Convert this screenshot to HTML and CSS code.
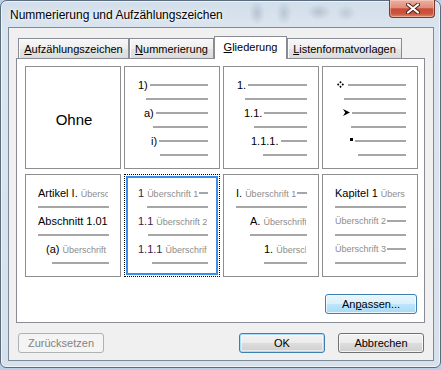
FILE: index.html
```html
<!DOCTYPE html>
<html lang="de">
<head>
<meta charset="utf-8">
<title>Nummerierung und Aufzählungszeichen</title>
<link rel="stylesheet" href="styles.css">
</head>
<body>
<div class="window">
  <div class="titlebar">
    <span class="title">Nummerierung und Aufzählungszeichen</span>
    <div class="close">
      <svg width="14" height="11" viewBox="0 0 14 11"><path d="M2 1.5 L12 9.5 M12 1.5 L2 9.5" stroke="#4a1f18" stroke-width="4" stroke-linecap="round"/><path d="M2 1.5 L12 9.5 M12 1.5 L2 9.5" stroke="#fff" stroke-width="2.2" stroke-linecap="round"/></svg>
    </div>
  </div>
  <div class="client">
    <div class="tabs">
      <div class="tab tab-bullets"><u>A</u>ufzählungszeichen</div>
      <div class="tab tab-numbers"><u>N</u>ummerierung</div>
      <div class="tab tab-outline is-active"><u>G</u>liederung</div>
      <div class="tab tab-styles"><u>L</u>istenformatvorlagen</div>
    </div>
    <div class="panel">
      <div class="grid">
        <div class="cell c-none"><span class="none-label">Ohne</span></div>

        <div class="cell">
          <div class="row in13"><span class="lbl">1)</span><span class="ln"></span></div>
          <div class="row in19"><span class="ln"></span></div>
          <div class="row in19"><span class="lbl">a)</span><span class="ln"></span></div>
          <div class="row in26"><span class="ln"></span></div>
          <div class="row in26"><span class="lbl">i)</span><span class="ln"></span></div>
          <div class="row in33"><span class="ln"></span></div>
        </div>

        <div class="cell">
          <div class="row in13"><span class="lbl">1.</span><span class="ln"></span></div>
          <div class="row in19"><span class="ln"></span></div>
          <div class="row in20"><span class="lbl">1.1.</span><span class="ln"></span></div>
          <div class="row in28"><span class="ln"></span></div>
          <div class="row in27"><span class="lbl">1.1.1.</span><span class="ln"></span></div>
          <div class="row in37"><span class="ln"></span></div>
        </div>

        <div class="cell">
          <div class="row in14"><span class="bullet"><svg width="7" height="7" viewBox="0 0 7 7"><path d="M3.5 0 L4.7 1.2 L3.5 2.4 L2.3 1.2 Z M1.2 2.3 L2.4 3.5 L1.2 4.7 L0 3.5 Z M5.8 2.3 L7 3.5 L5.8 4.7 L4.6 3.5 Z M3.5 4.6 L4.7 5.8 L3.5 7 L2.3 5.8 Z"/></svg></span><span class="ln ln-b"></span></div>
          <div class="row in19"><span class="ln"></span></div>
          <div class="row in20"><span class="bullet"><svg width="7" height="7" viewBox="0 0 7 7"><path d="M0 0 L7 3.5 L0 7 L2.2 3.5 Z"/></svg></span><span class="ln"></span></div>
          <div class="row in26"><span class="ln"></span></div>
          <div class="row in27"><span class="bullet bullet-sq"></span><span class="ln"></span></div>
          <div class="row in33"><span class="ln"></span></div>
        </div>

        <div class="cell">
          <div class="row in12"><span class="lbl">Artikel I.</span><span class="sub">Überschrift 1</span><span class="ln"></span></div>
          <div class="row in12"><span class="ln ln-full"></span></div>
          <div class="row in12"><span class="lbl">Abschnitt 1.01</span></div>
          <div class="row in12"><span class="ln ln-full"></span></div>
          <div class="row in20"><span class="lbl">(a)</span><span class="sub">Überschrift 3</span><span class="ln"></span></div>
          <div class="row in26"><span class="ln ln-full"></span></div>
        </div>

        <div class="cell is-selected">
          <div class="row in13"><span class="lbl lbl-num">1</span><span class="sub">Überschrift 1</span><span class="ln"></span></div>
          <div class="row in22"><span class="ln ln-full"></span></div>
          <div class="row in13"><span class="lbl lbl-num">1.1</span><span class="sub">Überschrift 2</span><span class="ln"></span></div>
          <div class="row in23"><span class="ln ln-full"></span></div>
          <div class="row in13"><span class="lbl lbl-num">1.1.1</span><span class="sub">Überschrift 3</span><span class="ln"></span></div>
          <div class="row in27"><span class="ln ln-full"></span></div>
        </div>

        <div class="cell">
          <div class="row in12"><span class="lbl">I.</span><span class="sub">Überschrift 1</span><span class="ln"></span></div>
          <div class="row in12"><span class="ln ln-full"></span></div>
          <div class="row in26"><span class="lbl">A.</span><span class="sub">Überschrift 2</span><span class="ln"></span></div>
          <div class="row in26"><span class="ln ln-full"></span></div>
          <div class="row in40"><span class="lbl">1.</span><span class="sub">Überschrift 3</span><span class="ln"></span></div>
          <div class="row in40"><span class="ln ln-full"></span></div>
        </div>

        <div class="cell">
          <div class="row in12"><span class="lbl">Kapitel 1</span><span class="sub">Überschrift 1</span><span class="ln"></span></div>
          <div class="row in12"><span class="ln ln-full"></span></div>
          <div class="row in12"><span class="sub sub-first">Überschrift 2</span><span class="ln"></span></div>
          <div class="row in12"><span class="ln ln-full"></span></div>
          <div class="row in12"><span class="sub sub-first">Überschrift 3</span><span class="ln"></span></div>
          <div class="row in12"><span class="ln ln-full"></span></div>
        </div>
      </div>
      <div class="panel-actions">
        <button class="btn btn-hot btn-custom">An<u>p</u>assen...</button>
      </div>
    </div>
    <div class="footer">
      <button class="btn" disabled>Zurücksetzen</button>
      <div class="spacer"></div>
      <button class="btn btn-default">OK</button>
      <button class="btn btn-cancel">Abbrechen</button>
    </div>
  </div>
</div>
</body>
</html>
```

FILE: styles.css
```css
* { box-sizing: border-box; }
html, body { margin: 0; padding: 0; }
body {
  width: 441px;
  height: 370px;
  overflow: hidden;
  background: #b9cfe8;
  font-family: "Liberation Sans", Arial, sans-serif;
}

.window {
  width: 441px;
  height: 368px;
  border: 1px solid #5b6c7e;
  border-radius: 7px 7px 6px 6px;
  background:
    radial-gradient(ellipse 8px 12px at 256px 12px, rgba(120,140,165,.35), rgba(120,140,165,0)),
    radial-gradient(ellipse 8px 12px at 283px 12px, rgba(120,140,165,.3), rgba(120,140,165,0)),
    radial-gradient(ellipse 12px 8px at 318px 11px, rgba(110,125,145,.3), rgba(110,125,145,0)),
    radial-gradient(ellipse 10px 8px at 345px 12px, rgba(120,135,155,.25), rgba(120,135,155,0)),
    linear-gradient(180deg, #d2deea 0%, #dbe5ef 28px, #d6e1ec 100%);
  box-shadow: inset 0 0 0 1px rgba(255,255,255,.6);
  display: flex;
  flex-direction: column;
}

.titlebar {
  height: 26px;
  flex: none;
  display: flex;
  justify-content: space-between;
  align-items: flex-start;
  padding: 0 5px 0 9px;
}
.title {
  margin-top: 7px;
  font-size: 12px;
  line-height: 14px;
  color: #000;
  text-shadow: 0 0 6px rgba(255,255,255,.95), 0 0 3px rgba(255,255,255,.9);
}
.close {
  width: 46px;
  height: 18px;
  margin-top: -1px;
  border: 1px solid #7a3a2e;
  border-top: 0;
  border-radius: 0 0 4px 4px;
  background: linear-gradient(180deg, #ecb0a2 0%, #df8e7c 45%, #c94c36 52%, #c9553e 80%, #de8a6c 100%);
  box-shadow: inset 0 0 0 1px rgba(255,220,210,.45);
  display: flex;
  align-items: center;
  justify-content: center;
}
.close svg { display: block; margin-left: 2px; }

.client {
  width: 426px;
  height: 334px;
  flex: none;
  margin: 0 6px 0 7px;
  border: 1px solid #7d8b99;
  background: #f0f0f0;
  padding: 8px 8px 0 7px;
  display: flex;
  flex-direction: column;
}

.tabs {
  height: 22px;
  margin-left: 2px;
  display: flex;
  align-items: flex-end;
}
.tab {
  height: 20px;
  border: 1px solid #898c95;
  border-bottom: 0;
  padding-top: 1px;
  font-size: 11px;
  line-height: 18px;
  text-align: center;
  white-space: nowrap;
  color: #000;
  background: linear-gradient(180deg, #f7f7f7 0%, #eeeeee 50%, #e4e4e4 51%, #dcdcdc 100%);
  box-shadow: inset 1px 1px 0 #fcfcfc;
}
.tab u { text-decoration-thickness: 1px; text-underline-offset: 1px; }
.tab-bullets { width: 111px; }
.tab-numbers { width: 85px; }
.tab-outline { width: 73px; }
.tab-styles { width: 115px; }
.tab.is-active {
  height: 23px;
  margin-bottom: -1px;
  background: #fff;
  box-shadow: none;
  position: relative;
  z-index: 1;
}

.panel {
  width: 409px;
  height: 265px;
  border: 1px solid #898c95;
  background: #fff;
  padding: 7px 7px 8px 8px;
  display: flex;
  flex-direction: column;
}

.grid {
  display: grid;
  grid-template-columns: repeat(4, 96px);
  grid-auto-rows: 103px;
  column-gap: 3px;
  row-gap: 5px;
}
.cell {
  border: 1px solid #8e8e8e;
  background: #fff;
  padding: 11px 11px 0 0;
  display: flex;
  flex-direction: column;
  overflow: hidden;
}
.cell.is-selected {
  border: 1px dotted #000;
  box-shadow: inset 0 0 0 1px #fff, inset 0 0 0 3px #3a8ee8;
}
.c-none {
  padding: 4px 0 0 2px;
  align-items: center;
  justify-content: center;
}
.none-label {
  font-size: 15px;
  color: #000;
}

.row {
  height: 14px;
  flex: none;
  display: flex;
  align-items: baseline;
  white-space: nowrap;
  min-width: 0;
}
.in12 { margin-left: 12px; }
.in13 { margin-left: 13px; }
.in14 { margin-left: 14px; }
.in19 { margin-left: 19px; }
.in20 { margin-left: 20px; }
.in22 { margin-left: 22px; }
.in23 { margin-left: 23px; }
.in26 { margin-left: 26px; }
.in27 { margin-left: 27px; }
.in28 { margin-left: 28px; }
.in33 { margin-left: 33px; }
.in37 { margin-left: 37px; }
.in40 { margin-left: 40px; }

.lbl {
  flex: none;
  font-size: 11px;
  line-height: 14px;
  color: #000;
}
.lbl-num { color: #3a1a4c; }
.sub {
  flex: 0 1 auto;
  min-width: 0;
  overflow: hidden;
  margin-left: 3px;
  font-size: 9px;
  line-height: 14px;
  color: #8c8c8c;
}
.sub-first { margin-left: 0; }
.ln {
  flex: 1 1 0;
  min-width: 0;
  height: 2px;
  align-self: center;
  margin-left: 2px;
  background: #a6a6a6;
}
.ln-full { margin-left: 0; }
.sub + .ln { margin-left: 1px; }
.ln-b { margin-left: 4px; }

.bullet {
  flex: none;
  align-self: center;
  display: flex;
  margin-top: -2px;
}
.bullet svg { display: block; fill: #000; }
.bullet-sq {
  width: 3px;
  height: 3px;
  margin-top: -3px;
  background: #000;
}

.panel-actions {
  margin-top: 17px;
  display: flex;
  justify-content: flex-end;
}

.btn {
  width: 86px;
  height: 20px;
  padding: 0;
  border: 1px solid #707070;
  border-radius: 3px;
  font-family: "Liberation Sans", Arial, sans-serif;
  font-size: 11px;
  line-height: 18px;
  color: #000;
  text-align: center;
  background: linear-gradient(180deg, #f2f2f2 0%, #ebebeb 50%, #dddddd 51%, #cfcfcf 100%);
  box-shadow: inset 0 0 0 1px rgba(255,255,255,.75);
}
.btn u { text-underline-offset: 1px; }
.btn-custom { width: 92px; }
.btn-hot {
  border-color: #3c7fb1;
  background: linear-gradient(180deg, #eaf6fd 0%, #d9f0fc 50%, #bee6fd 51%, #a7d9f5 100%);
}
.btn-default {
  border-color: #3c7fb1;
  box-shadow: inset 0 0 0 1px #a9defa, inset 0 0 0 2px rgba(255,255,255,.5);
}
.btn:disabled {
  border-color: #adb2b5;
  background: #f4f4f4;
  color: #838383;
  box-shadow: none;
}
.btn-cancel { margin-left: 13px; }

.footer {
  margin: 10px 1px 0 2px;
  display: flex;
}
.spacer { flex: 1; }
```
